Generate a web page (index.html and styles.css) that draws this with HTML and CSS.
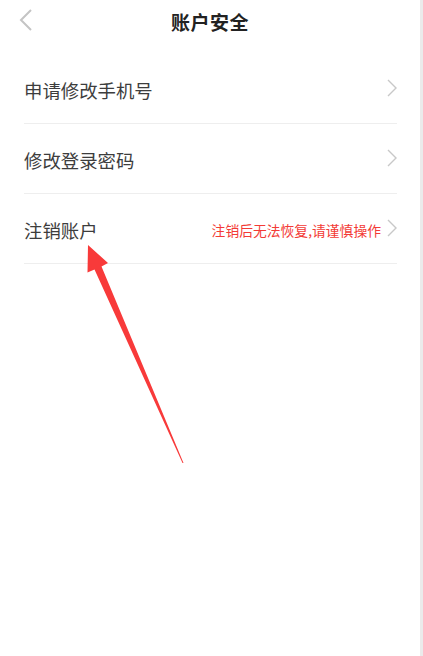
FILE: index.html
```html
<!DOCTYPE html>
<html lang="zh-CN">
<head>
  <meta charset="UTF-8">
  <meta name="viewport" content="width=device-width, initial-scale=1.0">
  <title>账户安全</title>
  <link rel="stylesheet" href="styles.css">
</head>
<body>
  <div class="page">
    <header class="topbar">
      <a href="#" class="back">
        <svg width="14" height="24" viewBox="0 0 14 24"><path d="M12 2 L2 12 L12 22" fill="none" stroke="#c4c4c4" stroke-width="2"/></svg>
      </a>
      <h1>账户安全</h1>
    </header>

    <ul class="menu">
      <li class="row">
        <span class="label">申请修改手机号</span>
        <span class="chev"><svg width="10" height="18" viewBox="0 0 10 18"><path d="M1 1 L9 9 L1 17" fill="none" stroke="#c8c8c8" stroke-width="1.4"/></svg></span>
      </li>
      <li class="row">
        <span class="label">修改登录密码</span>
        <span class="chev"><svg width="10" height="18" viewBox="0 0 10 18"><path d="M1 1 L9 9 L1 17" fill="none" stroke="#c8c8c8" stroke-width="1.4"/></svg></span>
      </li>
      <li class="row">
        <span class="label">注销账户</span>
        <span class="warn">注销后无法恢复,请谨慎操作</span>
        <span class="chev"><svg width="10" height="18" viewBox="0 0 10 18"><path d="M1 1 L9 9 L1 17" fill="none" stroke="#c8c8c8" stroke-width="1.4"/></svg></span>
      </li>
    </ul>

    <!-- annotation arrow pointing at 注销账户 -->
    <svg class="arrow" width="423" height="656" viewBox="0 0 423 656">
      <polygon points="88,245 108,263 101.5,266.5 183.5,463 182.5,463 94.5,269.5 87.5,272.5" fill="#f83a3a"/>
    </svg>
  </div>
</body>
</html>
```

FILE: styles.css
```css
body {
  margin: 0;
  padding: 0;
  background: #ffffff;
  font-family: "Noto Sans CJK SC", "Noto Sans", sans-serif;
  color: #333;
}
.page {
  position: relative;
  box-sizing: border-box;
  width: 100%;
  min-height: 656px;
  border-right: 3px solid #ebebeb;
}
.topbar {
  position: relative;
  height: 42px;
  display: flex;
  align-items: center;
  justify-content: center;
}
.topbar h1 {
  margin: 0;
  font-size: 19px;
  font-weight: 700;
  color: #222;
  letter-spacing: 0.5px;
}
.back {
  position: absolute;
  left: 19px;
  top: 8px;
  display: block;
  line-height: 0;
}
.menu {
  list-style: none;
  margin: 12px 23px 0 24px;
  padding: 0;
}
.row {
  box-sizing: border-box;
  height: 70px;
  padding-top: 3px;
  display: flex;
  align-items: center;
  border-bottom: 1px solid #eeeeee;
}
.label {
  flex: 1;
  font-size: 18.4px;
  color: #3d3d3d;
}
.warn {
  font-size: 13.8px;
  color: #f33b36;
  margin-right: 6px;
}
.chev {
  line-height: 0;
  margin-top: -5px;
}
.arrow {
  position: absolute;
  left: 0;
  top: 0;
  pointer-events: none;
}
```
